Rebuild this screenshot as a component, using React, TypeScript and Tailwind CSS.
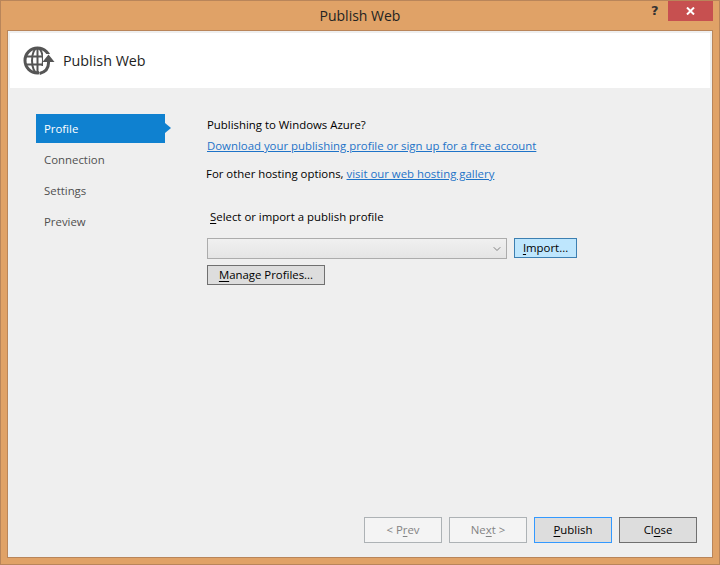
import { Fragment } from 'react';
import { ChevronDown } from 'lucide-react';

const steps = ['Profile', 'Connection', 'Settings', 'Preview'];

const GlobeIcon = () => (
  <svg width="33" height="30" viewBox="0 0 33 30" fill="none" stroke="#555555">
    <circle cx="14.5" cy="14.5" r="12.5" strokeWidth="3" />
    <ellipse cx="14.5" cy="14.5" rx="5.5" ry="12.5" strokeWidth="2" />
    <path d="M2.5 10.5h24M2.5 18.5h24" strokeWidth="2" />
    <path d="M14.5 2v25" strokeWidth="2" />
    <path d="M20 8h13v22H20z" fill="#ffffff" stroke="none" />
    <path d="M16 20h6v10h-6z" fill="#ffffff" stroke="none" />
    <path d="M25.5 13v4c0 5-3 9-9 10.5" strokeWidth="3" />
    <path d="M25.5 8.5l6 7.5H19.5z" fill="#555555" stroke="none" />
  </svg>
);

const Key = ({ label, at }: { label: string; at: number }) => (
  <Fragment>
    {label.slice(0, at)}
    <span className="underline underline-offset-2">{label[at]}</span>
    {label.slice(at + 1)}
  </Fragment>
);

const FooterButton = ({ label, at, className }: { label: string; at: number; className: string }) => (
  <button className={`w-[78px] h-[26px] border text-[11.4px] ${className}`}>
    <Key label={label} at={at} />
  </button>
);

export default function App() {
  return (
    <div className="w-[720px] h-[565px] flex flex-col bg-[#e0a267] border border-[#b9855a] text-[11.4px] text-black overflow-hidden [font-family:'Open_Sans','Noto_Sans',sans-serif]">
      <div className="relative h-[29px] shrink-0 flex items-center justify-center text-[14px] text-[#222222]">
        Publish Web
        <span className="absolute left-[650px] top-0 text-[13px] font-bold text-[#333333] [font-family:'DejaVu_Sans',sans-serif]">?</span>
        <div className="absolute left-[667px] top-0 w-[45px] h-[20px] bg-[#c75050] flex items-center justify-center">
          <svg width="9" height="8" viewBox="0 0 9 8" stroke="#ffffff" strokeWidth="2">
            <path d="M1 0.5l7 7M8 0.5l-7 7" />
          </svg>
        </div>
      </div>
      <div className="mx-[6px] mb-[6px] flex-1 flex flex-col border border-[#b9855a] bg-[#efefef] min-h-0">
        <div className="h-[57px] shrink-0 bg-white border-x-2 border-t-2 border-[#efefef] flex items-center pl-[13px] gap-[7px] text-[14.3px] text-[#1e1e1e]">
          <GlobeIcon />
          <span className="mt-[1px]">Publish Web</span>
        </div>
        <div className="flex-1 flex min-h-0">
          <div className="w-[170px] shrink-0 pl-[28px] pt-[26px] flex flex-col">
            {steps.map((step, i) => (
              <div key={step} className={`relative w-[129px] h-[29px] mb-[2px] pl-[8px] flex items-center ${i === 0 ? 'bg-[#0f81d0] text-white' : 'text-[#505050]'}`}>
                {step}
                {i === 0 && (
                  <div className="absolute left-full top-[9px] border-y-[5px] border-y-transparent border-l-[6px] border-l-[#0f81d0]" />
                )}
              </div>
            ))}
          </div>
          <div className="flex-1 flex flex-col min-w-0">
            <div className="flex-1 pt-[28px] pl-[29px] flex flex-col items-start">
              <div className="h-[17px] leading-[17px]">Publishing to Windows Azure?</div>
              <a className="h-[17px] mt-[4px] leading-[17px] text-[#1e73c8] underline">Download your publishing profile or sign up for a free account</a>
              <div className="h-[17px] mt-[11px] leading-[17px] -ml-px">
                For other hosting options, <a className="text-[#1e73c8] underline">visit our web hosting gallery</a>
              </div>
              <div className="h-[17px] mt-[26px] leading-[17px] ml-[3px]"><Key label="Select or import a publish profile" at={0} /></div>
              <div className="mt-[13px] flex gap-[7px]">
                <div className="w-[300px] h-[21px] border border-[#acacac] bg-gradient-to-b from-[#f0f0f0] to-[#e5e5e5] flex items-center justify-end pr-[3px]">
                  <ChevronDown size={12} color="#808080" strokeWidth={2} />
                </div>
                <button className="w-[63px] h-[20px] border border-[#3c7fb1] bg-[#bee6fd] text-[11.4px]"><Key label="Import..." at={0} /></button>
              </div>
              <button className="mt-[6px] w-[118px] h-[20px] border border-[#707070] bg-[#dddddd] text-[11.4px]"><Key label="Manage Profiles..." at={0} /></button>
            </div>
            <div className="shrink-0 flex justify-end gap-[7px] pr-[15px] pb-[14px]">
              <FooterButton label="< Prev" at={3} className="border-[#adb2b5] bg-[#f4f4f4] text-[#838383]" />
              <FooterButton label="Next >" at={2} className="border-[#adb2b5] bg-[#f4f4f4] text-[#838383]" />
              <FooterButton label="Publish" at={0} className="border-[#3399ff] bg-[#dddddd]" />
              <FooterButton label="Close" at={2} className="border-[#707070] bg-[#dddddd]" />
            </div>
          </div>
        </div>
      </div>
    </div>
  );
}
